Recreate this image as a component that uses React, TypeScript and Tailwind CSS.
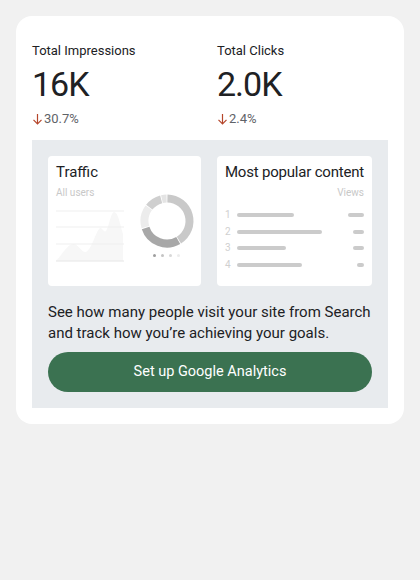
import React from 'react';

const FONT = { fontFamily: 'Roboto, "Open Sans", sans-serif' };

function arc(cx: number, cy: number, r: number, a0: number, a1: number) {
  const p = (a: number) => {
    const rad = ((a - 90) * Math.PI) / 180;
    return [cx + r * Math.cos(rad), cy + r * Math.sin(rad)];
  };
  const [x0, y0] = p(a0);
  const [x1, y1] = p(a1);
  const large = a1 - a0 > 180 ? 1 : 0;
  return `M ${x0.toFixed(2)} ${y0.toFixed(2)} A ${r} ${r} 0 ${large} 1 ${x1.toFixed(2)} ${y1.toFixed(2)}`;
}

const segments = [
  { a0: 1, a1: 148, color: '#c9c9c9' },
  { a0: 150, a1: 252, color: '#a8a8a8' },
  { a0: 254, a1: 306, color: '#ececec' },
  { a0: 308, a1: 345, color: '#cfcfcf' },
  { a0: 347, a1: 359, color: '#e4e4e4' },
];

function Donut() {
  return (
    <svg width="56" height="56" viewBox="0 0 56 56">
      {segments.map((s, i) => (
        <path key={i} d={arc(28, 28, 22.5, s.a0, s.a1)} fill="none" stroke={s.color} strokeWidth="8" />
      ))}
    </svg>
  );
}

function AreaChart() {
  return (
    <svg width="68" height="54" viewBox="0 0 68 54">
      <path
        d="M0 52 C 6 46, 12 34, 18 35 C 23 36, 26 44, 30 43 C 36 40, 40 22, 44 19 C 46 18, 48 24, 50 22 C 53 18, 55 3, 58 3 C 62 3, 64 15, 67 25 L 67 52 Z"
        fill="#f7f7f7"
      />
      <line x1="0" y1="2" x2="68" y2="2" stroke="#efefef" strokeWidth="1" />
      <line x1="0" y1="18" x2="68" y2="18" stroke="#efefef" strokeWidth="1" />
      <line x1="0" y1="35" x2="68" y2="35" stroke="#efefef" strokeWidth="1" />
      <line x1="0" y1="52" x2="68" y2="52" stroke="#e6e6e6" strokeWidth="1" />
    </svg>
  );
}

function Stat({ label, value, change }: { label: string; value: string; change: string }) {
  return (
    <div className="flex-1 flex flex-col">
      <div className="text-[13px] leading-5 text-[#202124]">{label}</div>
      <div className="mt-[4px] text-[34px] leading-[38px] text-[#202124] tracking-[-1px]">{value}</div>
      <div className="mt-[6px] flex items-center text-[13px] leading-5 text-[#5f6368]">
        <svg width="11" height="12" viewBox="0 0 11 12" className="mr-px">
          <path d="M5.5 1 V10.5 M1.5 6.8 L5.5 10.8 L9.5 6.8" fill="none" stroke="#b5462b" strokeWidth="1.2" />
        </svg>
        {change}
      </div>
    </div>
  );
}

const rows = [
  { n: 1, w: 57, v: 16 },
  { n: 2, w: 85, v: 11 },
  { n: 3, w: 49, v: 11 },
  { n: 4, w: 65, v: 7 },
];

export default function App() {
  return (
    <div className="min-h-[580px] w-[420px] bg-[#f1f1f1] p-4" style={FONT}>
      <div className="bg-white rounded-[16px] px-4 pt-[25px] pb-4">
        <div className="flex gap-[14px]">
          <Stat label="Total Impressions" value="16K" change="30.7%" />
          <Stat label="Total Clicks" value="2.0K" change="2.4%" />
        </div>

        <div className="mt-[11px] bg-[#e8ebee] p-4">
          <div className="flex gap-4">
            {/* Traffic card */}
            <div className="flex-1 h-[130px] bg-white rounded-[4px] px-2 pt-[6px]">
              <div className="text-[15px] leading-5 text-[#202124]">Traffic</div>
              <div className="flex mt-[5px]">
                <div className="flex flex-col">
                  <div className="text-[10px] leading-3 text-[#c8c8c8]">All users</div>
                  <div className="mt-[10px]">
                    <AreaChart />
                  </div>
                </div>
                <div className="ml-auto -mr-[2px] mt-[6px] flex flex-col items-center">
                  <Donut />
                  <div className="mt-[5px] flex gap-[5px]">
                    <span className="w-[3px] h-[3px] rounded-full bg-[#9e9e9e]" />
                    <span className="w-[3px] h-[3px] rounded-full bg-[#c4c4c4]" />
                    <span className="w-[3px] h-[3px] rounded-full bg-[#d8d8d8]" />
                    <span className="w-[3px] h-[3px] rounded-full bg-[#ececec]" />
                  </div>
                </div>
              </div>
            </div>

            {/* Most popular card */}
            <div className="flex-1 h-[130px] bg-white rounded-[4px] px-2 pt-[6px]">
              <div className="text-[15px] leading-5 text-[#202124] whitespace-nowrap tracking-[-0.2px]">Most popular content</div>
              <div className="mt-[5px] text-right text-[10px] leading-3 text-[#c8c8c8]">Views</div>
              <div className="mt-[14px] flex flex-col gap-[12.5px]">
                {rows.map(r => (
                  <div key={r.n} className="flex items-center h-[4px]">
                    <span className="w-[12px] text-[10px] leading-3 text-[#d0d0d0]">{r.n}</span>
                    <span className="h-[4px] rounded-full bg-[#cbcbcb]" style={{ width: r.w }} />
                    <span className="ml-auto h-[4px] rounded-full bg-[#cbcbcb]" style={{ width: r.v }} />
                  </div>
                ))}
              </div>
            </div>
          </div>

          <p className="mt-[16px] text-[15px] leading-[21px] text-[#202124]">
            See how many people visit your site from Search and track how you’re achieving your goals.
          </p>

          <button className="mt-[8px] w-full h-[40px] rounded-full bg-[#3b7251] text-white text-[14.5px]">
            Set up Google Analytics
          </button>
        </div>
      </div>
    </div>
  );
}
